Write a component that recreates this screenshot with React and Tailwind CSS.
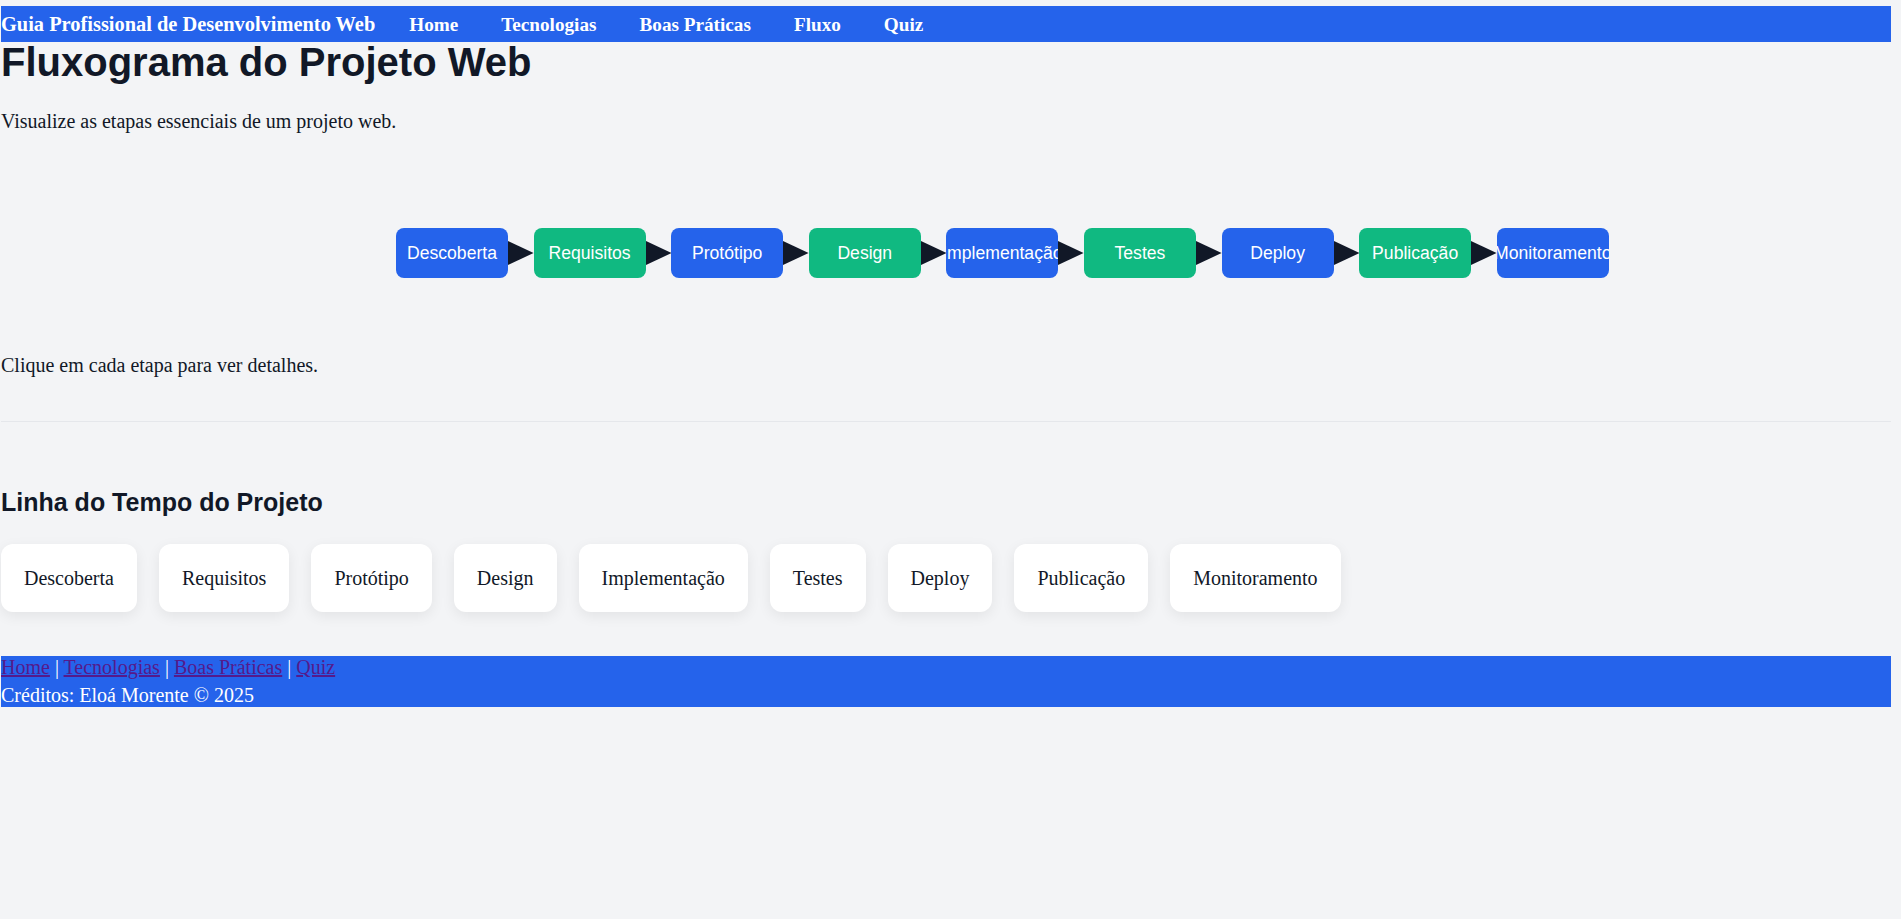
import React from "react";

const etapas = [
  { nome: "Descoberta", cor: "bg-[#2563eb]" },
  { nome: "Requisitos", cor: "bg-[#10b981]" },
  { nome: "Protótipo", cor: "bg-[#2563eb]" },
  { nome: "Design", cor: "bg-[#10b981]" },
  { nome: "Implementação", cor: "bg-[#2563eb]" },
  { nome: "Testes", cor: "bg-[#10b981]" },
  { nome: "Deploy", cor: "bg-[#2563eb]" },
  { nome: "Publicação", cor: "bg-[#10b981]" },
  { nome: "Monitoramento", cor: "bg-[#2563eb]" },
];

const navLinks = ["Home", "Tecnologias", "Boas Práticas", "Fluxo", "Quiz"];

const Seta = () => (
  <svg viewBox="0 0 26 24" preserveAspectRatio="none" className="h-[24px] w-[25.6px] shrink-0">
    <polygon points="0,0 26,12 0,24" fill="#111827" />
  </svg>
);

const App = () => {
  return (
    <div className="min-h-screen w-full bg-[#f3f4f6] font-['Liberation_Serif','Times_New_Roman',serif] text-[20px] text-[#111827]">
      <div className="ml-[1px] w-[1890px] pt-[6px]">
        {/* cabeçalho */}
        <header className="flex h-[36px] items-center bg-[#2563eb] font-bold text-white leading-[23px]">
          <span className="text-[20.4px]">Guia Profissional de Desenvolvimento Web</span>
          <nav className="ml-[34px] flex items-center gap-[43px] text-[19.2px]">
            {navLinks.map((link) => (
              <a key={link} href="#" className="text-white no-underline">
                {link}
              </a>
            ))}
          </nav>
        </header>

        <h1 className="font-['Liberation_Sans',Arial,sans-serif] text-[40px] font-bold leading-[40px]">
          Fluxograma do Projeto Web
        </h1>
        <p className="mt-[28px] leading-[23px]">Visualize as etapas essenciais de um projeto web.</p>

        {/* fluxograma */}
        <div className="mt-[95px] flex items-center pl-[395px] font-['Liberation_Sans',Arial,sans-serif]">
          {etapas.map((etapa, i) => (
            <React.Fragment key={etapa.nome}>
              <div
                className={`flex h-[50px] w-[112px] shrink-0 items-center justify-center overflow-hidden whitespace-nowrap rounded-lg text-[17.6px] text-white ${etapa.cor}`}
              >
                {etapa.nome}
              </div>
              {i < etapas.length - 1 && <Seta />}
            </React.Fragment>
          ))}
        </div>

        <p className="mt-[76px] leading-[23px]">Clique em cada etapa para ver detalhes.</p>

        <hr className="mt-[44px] border-0 border-t border-[#e5e7eb]" />

        <h2 className="mt-[66px] font-['Liberation_Sans',Arial,sans-serif] text-[25px] font-bold leading-[29px]">
          Linha do Tempo do Projeto
        </h2>

        <div className="mt-[27px] flex gap-[22px]">
          {etapas.map((etapa) => (
            <div
              key={etapa.nome}
              className="flex h-[68px] items-center rounded-xl bg-white px-[23px] leading-[23px] shadow-[0_4px_14px_rgba(0,0,0,0.07)]"
            >
              {etapa.nome}
            </div>
          ))}
        </div>

        {/* rodapé */}
        <footer className="mt-[44px] bg-[#2563eb] text-white leading-[23px]">
          <div className="mb-[5px]">
            <a href="#" className="text-[#551a8b] underline">Home</a> |{" "}
            <a href="#" className="text-[#551a8b] underline">Tecnologias</a> |{" "}
            <a href="#" className="text-[#551a8b] underline">Boas Práticas</a> |{" "}
            <a href="#" className="text-[#551a8b] underline">Quiz</a>
          </div>
          <div>Créditos: Eloá Morente © 2025</div>
        </footer>
      </div>
    </div>
  );
};

export default App;
